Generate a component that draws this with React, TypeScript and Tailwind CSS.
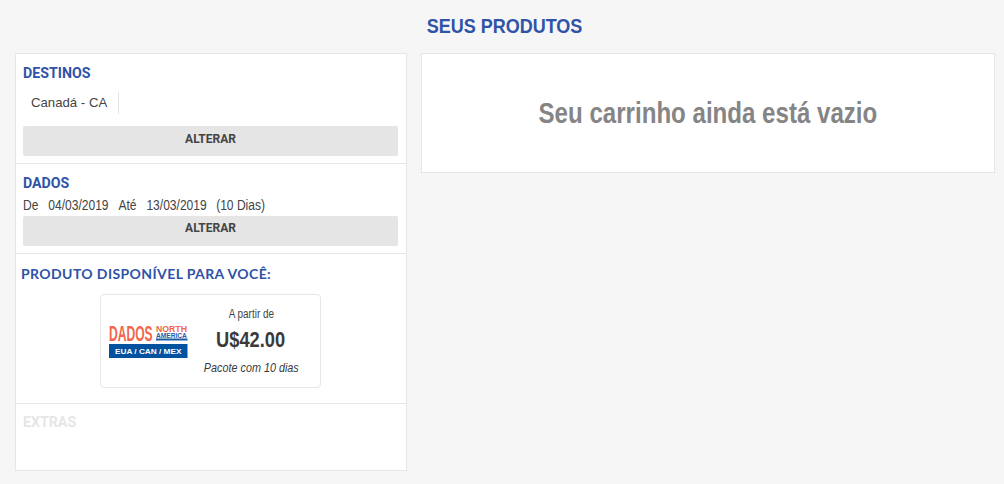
const liberation = "font-['Liberation_Sans',sans-serif]"

function Logo() {
  return (
    <svg width="79" height="42" viewBox="0 -4 79 42" className="shrink-0" fontFamily="Liberation Sans, sans-serif" fontWeight="700">
      <text transform="translate(0 17) scale(0.55 1)" fontSize="22" fill="#f2664a">DADOS</text>
      <text transform="translate(47 8) scale(1.05 1)" fontSize="8.3" fill="#f2664a">NORTH</text>
      <text transform="translate(47 13.5) scale(1 1)" fontSize="6.6" fill="#1f5aa6">AMERICA</text>
      <rect x="47" y="14.5" width="31.5" height="2" fill="#1f5aa6" />
      <rect x="0" y="20" width="78.5" height="14" fill="#02529f" />
      <text transform="translate(39.2 30) scale(1.03 1)" textAnchor="middle" fontSize="8" fill="#ffffff">EUA / CAN / MEX</text>
    </svg>
  )
}

function SectionTitle({ children }: { children: string }) {
  return <h2 className="font-['Roboto',sans-serif] text-[14.2px] leading-[20px] font-bold text-[#2f53a7]">{children}</h2>
}

function ChangeButton({ className }: { className: string }) {
  return (
    <button className={`block w-[375px] h-[30px] rounded-[2px] bg-[#e5e5e5] text-center font-['Roboto',sans-serif] text-[12px] font-bold text-[#444] ${className}`}>
      ALTERAR
    </button>
  )
}

export default function App() {
  return (
    <div className="w-[1004px] h-[484px] overflow-hidden bg-[#f6f6f6] pl-[15px] pr-[9px]">
      <h1 className={`h-[53px] pt-[13px] pr-[2px] text-center text-[20px] leading-[26px] font-bold text-[#2f53a7] ${liberation}`}>
        <span className="inline-block scale-x-[.9]">SEUS PRODUTOS</span>
      </h1>

      <div className="flex items-start gap-[14px]">
        <aside className="w-[392px] h-[418px] border border-[#e6e6e6] bg-white flex flex-col">
          <section className="h-[110px] shrink-0 border-b border-[#e6e6e6] px-[7px] pt-[9px]">
            <SectionTitle>DESTINOS</SectionTitle>
            <div className="mt-[9px] flex">
              <span className={`h-[22px] border-r border-[#e6e6e6] pl-[8px] pr-[11px] text-[13.2px] leading-[22px] text-[#444] ${liberation}`}>Canadá - CA</span>
            </div>
            <ChangeButton className="mt-[12px] pb-[4px]" />
          </section>

          <section className="h-[90px] shrink-0 border-b border-[#e6e6e6] px-[7px] pt-[9px]">
            <SectionTitle>DADOS</SectionTitle>
            <p className={`flex h-[22px] pt-[1px] origin-left scale-x-[.86] text-[14px] leading-[22px] text-[#444] ${liberation}`}>
              <span className="mr-[11.5px]">De</span>
              <span className="mr-[11.5px]">04/03/2019</span>
              <span className="mr-[11.5px]">Até</span>
              <span className="mr-[11px]">13/03/2019</span>
              <span>(10 Dias)</span>
            </p>
            <ChangeButton className="mt-[1px] pb-[6px]" />
          </section>

          <section className="h-[150px] shrink-0 border-b border-[#e6e6e6] px-[5px] pt-[10px]">
            <h2 className="font-['Lato',sans-serif] text-[14px] tracking-[0.4px] leading-[20px] font-bold text-[#2f53a7]">PRODUTO DISPONÍVEL PARA VOCÊ:</h2>
            <div className="ml-[79px] mt-[10px] flex h-[94px] w-[221px] items-center rounded-[4px] border border-[#e6e6e6] pl-[8px]">
              <Logo />
              <div className={`flex-1 pr-[6px] text-center text-[#3a3a3a] ${liberation}`}>
                <p className="text-[12px] leading-[16px] text-[#444]"><span className="inline-block scale-x-[.83]">A partir de</span></p>
                <p className="mt-[5px] text-[22px] leading-[26px] font-bold"><span className="inline-block scale-x-[.83]">U$42.00</span></p>
                <p className="mt-[6px] whitespace-nowrap text-[13.5px] leading-[18px] italic"><span className="inline-block scale-x-[.8]">Pacote com 10 dias</span></p>
              </div>
            </div>
          </section>

          <section className="flex-1 px-[7px] pt-[8px]">
            <h2 className="font-['Roboto',sans-serif] text-[14.2px] leading-[20px] font-bold text-[#e6e6e6]">EXTRAS</h2>
          </section>
        </aside>

        <main className="w-[574px] h-[120px] border border-[#e6e6e6] bg-white flex items-center justify-center">
          <p className={`text-[30px] leading-[36px] font-bold text-[#858585] ${liberation}`}>
            <span className="inline-block scale-x-[.803]">Seu carrinho ainda está vazio</span>
          </p>
        </main>
      </div>
    </div>
  )
}
